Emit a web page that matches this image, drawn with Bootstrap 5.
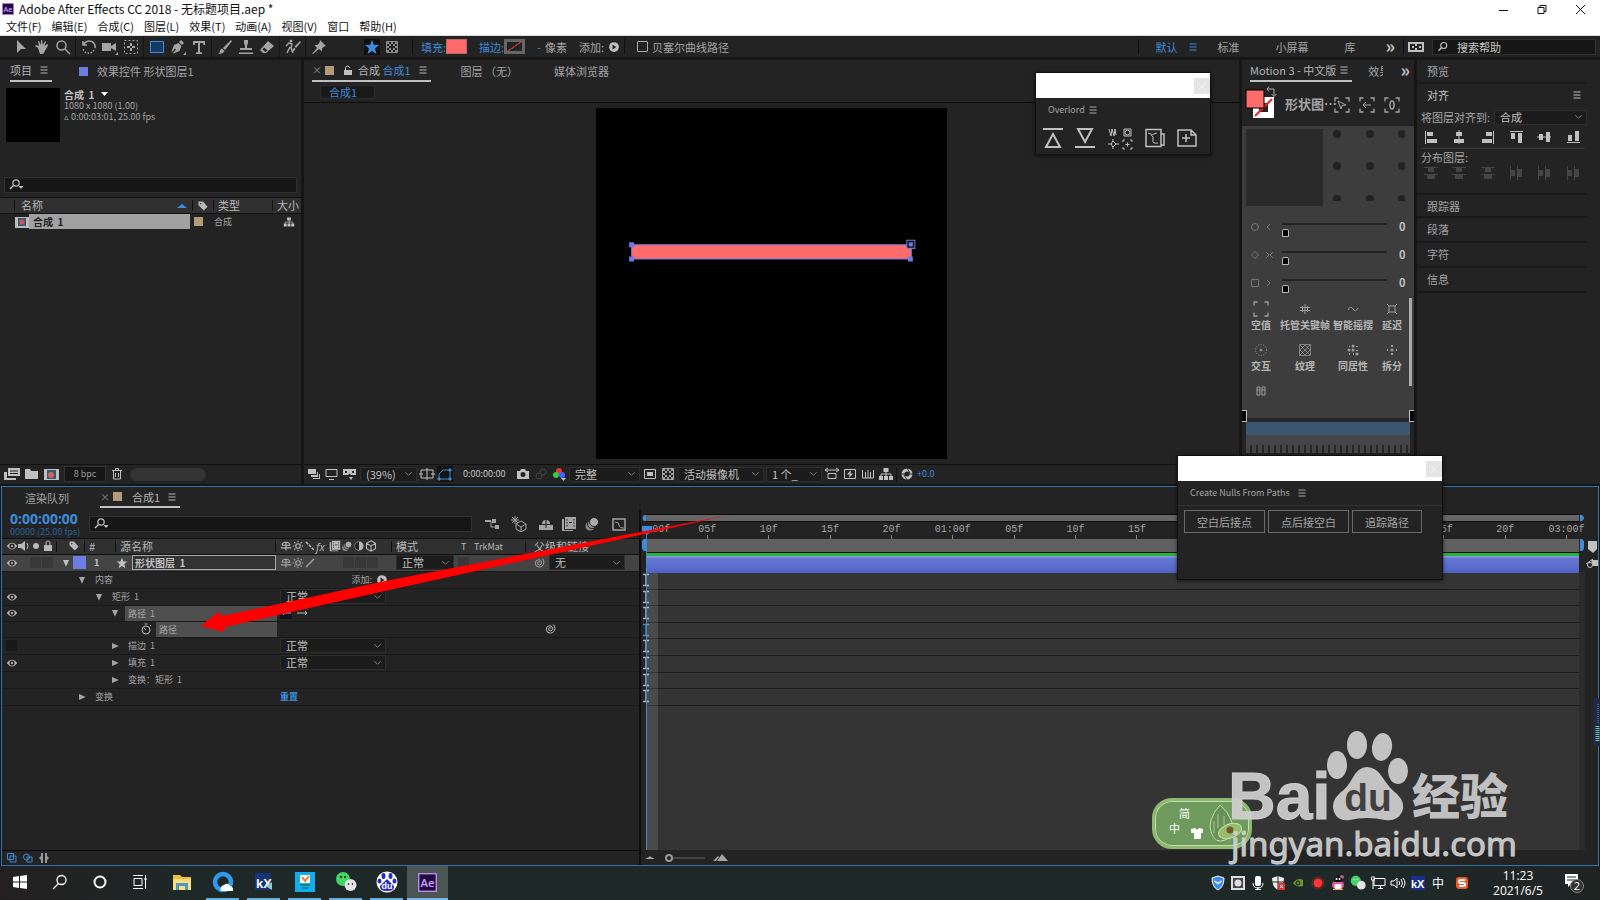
<!DOCTYPE html>
<html lang="zh-CN">
<head>
<meta charset="utf-8">
<meta name="viewport" content="width=device-width, initial-scale=1">
<title>Adobe After Effects CC 2018 - 无标题项目.aep *</title>
<link href="https://cdn.jsdelivr.net/npm/bootstrap@5.3.0/dist/css/bootstrap.min.css" rel="stylesheet">
<style>
:root{--ink:#a4a4a4;--bluec:#3b8cdc;--panel:#232323;--edge:#151515;--cjk:"Noto Sans CJK SC",sans-serif}
body{height:100vh;min-height:600px;overflow:hidden;background:var(--edge);color:var(--ink);font:11px/16px var(--cjk)}
svg{display:block;flex:none}
.i{width:16px;height:16px;fill:currentColor;stroke:none}
.l{fill:none;stroke:currentColor}
.s12{width:12px;height:12px}
.s22{width:22px;height:22px}
a{color:inherit;text-decoration:none}
button{background:none;border:0;padding:0;color:inherit;line-height:inherit}
input,select{font:inherit;color:inherit}
.blue{color:var(--bluec)}
.lt{color:#c0c0c0}
/* window chrome */
.titlebar{height:18px;background:#fff;color:#111;font:12px/18px var(--cjk)}
.menubar{height:18px;background:#fff;color:#111;font:11px/17px var(--cjk);border-bottom:1px solid #ddd}
.menubar a{margin-right:10px}
.toolbar{height:21px;background:var(--panel);margin-bottom:3px}
.tgroup{border-right:1px solid #151515;padding-right:2px;margin-right:2px}
.tgroup button{width:21px;height:21px;display:flex;align-items:center;justify-content:center}
.tgroup .on{color:var(--bluec)}
.vr1{width:1px;height:15px;background:#111}
.fillbox{width:21px;height:15px;border:1px solid #b66}
.searchbox{background:#161616;border:1px solid #303030;height:16px}
.searchbox input{background:none;border:0;outline:0;flex:1;min-width:0;padding:0;line-height:14px}
.searchbox input::placeholder{color:#c8c8c8;opacity:1}
/* panels */
.upper{flex:425 1 0;min-height:0;gap:3px}
.pane{background:var(--panel);min-width:0;min-height:0;position:relative}
.tabs{height:22px}
.tabon{border-bottom:2px solid #c0c0c0;height:21px;line-height:20px;color:#b4b4b4}
.xx{width:13px;font-size:10px;color:#888}
.proj{width:301px;flex:none}
.motion{width:172px;flex:none}
.side{width:183px;flex:none}
.sq{width:9px;height:9px;background:#b39b78;flex:none}
.thumb{width:54px;height:54px;background:#000}
.meta{font-size:9px;line-height:11px}
.meta b{font-size:10px}
.colhead{background:#303030;border-top:1px solid #111;border-bottom:1px solid #111;height:17px;line-height:15px;color:#b8b8b8;white-space:nowrap}
.colhead .sep{border-left:1px solid #111;height:11px}
.foot{height:20px;border-top:1px solid #111}
.form-select.sel{--bs-form-select-bg-img:url("data:image/svg+xml,%3csvg xmlns='http://www.w3.org/2000/svg' viewBox='0 0 10 6'%3e%3cpath fill='none' stroke='%23888' d='M1.500 1l3.500 3.500L8.500 1'/%3e%3c/svg%3e");background-color:#1c1c1c;background-size:9px 6px;background-position:right 3px center;border:1px solid #2e2e2e;border-radius:1px;padding:0 12px 0 5px;height:15px;line-height:13px;font-size:11px;color:#c0c0c0;min-height:0}
.crumb{background:#191919;border:1px solid #2c2c2c;width:55px;height:14px;line-height:12px;padding-left:8px}
.viewer{border-top:1px solid #0c0c0c;flex:1;min-height:0}
.viewer svg{height:calc(100% - 9px)}
/* motion */
.mhead{height:44px}
.mbody{background:#3d3d3d}
.pad{width:77px;height:77px;background:#2a2a2a}
.dots{width:72px;height:72px}
.srow{height:28px}
.srow b{line-height:20px;height:24px}
input.rng{appearance:none;background:linear-gradient(#232323,#232323) 0 4px/100% 2px no-repeat;height:18px;margin:0;padding:0;width:105px;border:0}
input.rng::-webkit-slider-thumb{appearance:none;width:7px;height:8px;background:#000;border:1px solid #bbb;border-radius:2px 2px 0 0;margin-top:9px}
.mgrid{display:grid;grid-template-columns:38px 50px 46px 32px;font-size:10px;font-weight:700;line-height:12px;color:#b4b4b4;height:101px;overflow:hidden;align-content:start;white-space:nowrap}
.mgrid button{height:41px;display:flex;flex-direction:column;align-items:center;gap:2px;font-weight:700}
.mgrid .i{opacity:.8}
.ticks{height:18px;background:linear-gradient(#454545 0 10px,transparent 10px),repeating-linear-gradient(90deg,#454545 0 4px,#262626 4px 6px)}
.brk{width:5px;height:12px;background:#000;border:1px solid #bbb}
/* right side */
.acc{height:25px;line-height:23px;border-bottom:2px solid #181818;padding-left:10px;width:170px}
.six{display:grid;grid-template-columns:repeat(6,1fr);justify-items:center;width:170px}
/* timeline */
.tl{flex:379 1 0;min-height:0;background:var(--panel);border:1px solid #3373ab;margin:2px 1px 0;position:relative}
.tleft{width:639px;flex:none;border-right:2px solid #0e0e0e}
.time{font:bold 14px/14px "Noto Sans",sans-serif}
.lrow{display:grid;grid-template-columns:54px 224px 112px 138px 1fr;align-items:center;font-size:9px}
.lrow>div{display:flex;align-items:center;min-width:0}
.rows{height:133px;display:grid;grid-auto-rows:1fr}
.rows>.lrow{border-bottom:1px solid #1a1a1a}
.lrow .i{width:12px;height:12px}
.first{height:17px;background:#444;border-bottom:1px solid #1a1a1a}
.d1{padding-left:20px}.d2{padding-left:37px}.d3{padding-left:53px}
.tw{margin-right:7px}
.cell{width:11px;height:11px;background:#383838;margin-right:1px}
.hl{background:#4f4f4f;flex:1;align-self:stretch;height:15px;line-height:15px;padding-left:3px;margin-right:3px}
.lname{width:144px;height:15px;background:#333;border:1px solid #aaa;font-weight:700;font-size:10px;line-height:12px;padding:0 2px;color:#c0c0c0}
.tright{flex:1;min-width:0;padding-top:5px}
.nav1{height:8px;background:#666;border:1px solid #0c0c0c;border-width:1px 0}
.ruler{height:17px;font:10px/11px "Liberation Mono",monospace;padding-top:2px}
.ruler span{flex:0 0 6.579%;text-align:center;background:linear-gradient(#888,#888) center bottom/1px 4px no-repeat;height:15px;white-space:nowrap}
.ruler .half{flex-basis:3.289%;background:none}
.work{height:13px;background:#606060}
.green{height:4px;background:#22b53a;border:1px solid #0c0c0c;border-width:1px 0 0}
.clip{height:17px;background:linear-gradient(#8f98dd 0 1px,#6878d4 2px,#5062c4)}
.tbg{background:#343434;flex:1}
.tbg .rows>div{border-bottom:1px solid #1d1d1d}
.tbg .rows svg{margin-left:-4px}
.playcol{position:absolute;top:59px;bottom:0;left:0;width:12px;background:#ffffff1c}
.playline{position:absolute;top:12px;bottom:0;left:0;width:1px;background:#4388c8}
.tfoot{height:15px;border-top:1px solid #0c0c0c}
.arrow{position:absolute;left:188px;top:18px}
/* floating windows */
.float{position:absolute;background:var(--panel);border:1px solid #111;box-shadow:0 1px 4px #0009}
.fbar{height:25px;background:#fff}
.fbar button{width:16px;height:16px;background:#e4e4e4;color:#f4f4f4;line-height:14px}
.fbtn{border:1px solid #6a6a6a!important;height:23px;padding:0 12px!important}
.wm{position:absolute;right:80px;bottom:30px}
.ime{position:absolute;right:348px;bottom:51px;width:100px;height:51px;border-radius:20px;background:#6f9a5d;border:3px solid #8cb870;box-shadow:inset 0 0 0 1px #c5deb0;color:#fff}
.gauge{position:absolute;right:0;top:698px;width:7px;height:48px;background:#1f2b45;border-radius:3px}
#tz{appearance:none;width:40px;height:6px;background:linear-gradient(#444,#444) center/100% 2px no-repeat;overflow:visible}
#tz::-webkit-slider-thumb{width:8px;height:8px;margin-top:-2px;background:#232323;border:2px solid #999;border-radius:50%}
#tz::-webkit-slider-runnable-track{height:4px;background:none}
/* taskbar */
.taskbar{height:34px;flex:none;background:linear-gradient(90deg,#231f20,#1e2927 12%,#1e2927 88%,#1f2423);color:#fff}
.tk{height:34px;width:41px;display:flex;align-items:center;justify-content:center;border-bottom:2px solid transparent!important}
.tk.w40{width:40px}
.tk.run{background:linear-gradient(#6aaede,#6aaede) center bottom/33px 2px no-repeat;background-origin:border-box}
.tk.act{background:#4b5553;border-bottom-color:#7db7e4!important}
.tray button{width:20px;display:flex;justify-content:center}
.clock{font:12px/15px "Open Sans",sans-serif;width:60px;text-align:center}
</style>
</head>
<body class="d-flex flex-column position-relative">
<svg width="0" height="0" class="position-absolute">
<defs>
<symbol id="ham" viewBox="0 0 16 16"><path d="M4.500 5h7M4.500 8h7M4.500 11h7" stroke="currentColor" fill="none"/></symbol>
<symbol id="eye" viewBox="0 0 16 16"><path d="M1 8q7-9 14 0q-7 9-14 0z" /><circle cx="8" cy="8" r="3.500" fill="#222"/><circle cx="8" cy="8" r="1.500"/></symbol>
<symbol id="mag" viewBox="0 0 16 16"><circle cx="9" cy="6" r="4" fill="none" stroke="currentColor" stroke-width="1.500"/><path d="M6 9l-4 4" stroke="currentColor" stroke-width="1.800"/></symbol>
<symbol id="magd" viewBox="0 0 16 16"><circle cx="7" cy="6" r="3.200" fill="none" stroke="currentColor" stroke-width="1.200"/><path d="M4.500 8.500L1 12" stroke="currentColor" stroke-width="1.500"/><path d="M9.500 9h5L12 12z"/></symbol>
<symbol id="tag" viewBox="0 0 16 16"><path fill-rule="evenodd" d="M2 2h6l6 7-5 5-7-7zM5 4a1 1 0 100 2 1 1 0 000-2z"/></symbol>
<symbol id="star" viewBox="0 0 16 16"><path d="M8 1l2 5h5l-4 3.500 1.500 5.500L8 12l-4.500 3L5 9.500 1 6h5z"/></symbol>
<symbol id="dn" viewBox="0 0 16 16"><path d="M4 4h8l-4 9z"/></symbol>
<symbol id="rt" viewBox="0 0 16 16"><path d="M4 4v8l9-4z"/></symbol>
<symbol id="play" viewBox="0 0 16 16"><circle cx="8" cy="8" r="6.500"/><path d="M6 4.500v7L11 8z" fill="#222"/></symbol>
<symbol id="spiral" viewBox="0 0 16 16"><path fill="none" stroke="currentColor" stroke-width="1.300" d="M9.500 6.500Q6.500 5.500 6 8q0 2.500 2.500 2.500 3 0 3-3.500Q11 3.500 7.500 3.500 3 4 3 8.500q.5 5 5.500 5 5.500-.5 6-6.500 0-3-2-5"/></symbol>
<symbol id="shy" viewBox="0 0 16 16"><path fill="none" stroke="currentColor" stroke-width="1.500" d="M3 7q0-4 5-4t5 4zM8 3v11M1 10.500h14"/></symbol>
<symbol id="sun" viewBox="0 0 16 16"><circle cx="8" cy="8" r="3" fill="none" stroke="currentColor" stroke-width="1.500"/><path stroke="currentColor" stroke-width="1.500" d="M8 1v2M8 13v2M1 8h2M13 8h2M3 3l1.500 1.500M11.500 11.500L13 13M3 13l1.500-1.500M11.500 4.500L13 3"/></symbol>
<symbol id="film" viewBox="0 0 16 16"><path d="M4 1h11v12H4z"/><path d="M1 3h2v11h9v1H1z"/><path d="M6 3v8M13 3v8" stroke="#222" stroke-dasharray="1.500 1.500"/><path d="M8 6.500h3" stroke="#222"/></symbol>
<symbol id="blur" viewBox="0 0 16 16"><circle cx="6" cy="10" r="4.500" fill="#888"/><circle cx="8" cy="8" r="4.500" fill="#999" stroke="#222"/><circle cx="10" cy="6" r="4.500" fill="#aaa" stroke="#222"/></symbol>
<symbol id="cube" viewBox="0 0 16 16"><path fill="none" stroke="currentColor" stroke-width="1.400" d="M8 1l6 3.500v7L8 15l-6-3.500v-7zM2 4.500L8 8l6-3.500M8 8v7"/></symbol>
<symbol id="tree" viewBox="0 0 16 16"><path d="M5.500 2h5v4h-5zM1 10h4v4H1zM6 10h4v4H6zM11 10h4v4h-4z"/><path d="M8 6v4M3 10V8h10v2" fill="none" stroke="currentColor"/></symbol>
<symbol id="chk" viewBox="0 0 16 16"><g opacity=".8"><path fill="none" stroke="currentColor" d="M2.500 2.500h11v11h-11z"/><path d="M3 3h2v2H3zM7 3h2v2H7zM11 3h2v2h-2zM5 5h2v2H5zM9 5h2v2H9zM3 7h2v2H3zM11 7h2v2h-2zM5 9h2v2H5zM9 9h2v2H9zM3 11h2v2H3zM7 11h2v2H7zM11 11h2v2h-2z"/></g></symbol>
<symbol id="ibeam" viewBox="0 0 8 14"><path d="M1 1.500h6M1 12.500h6M4 1.500v11" fill="none" stroke="currentColor" stroke-width="1.500"/></symbol>
<symbol id="al1" viewBox="0 0 16 16"><path d="M2 2h1v13H2zM4 3h6v4H4zM4 10h10v4H4z"/></symbol>
<symbol id="al2" viewBox="0 0 16 16"><path d="M7.500 1h1v14h-1zM5 3h6v4H5zM3 10h10v4H3z"/></symbol>
<symbol id="di1" viewBox="0 0 16 16"><path d="M1 2h14v1H1zM5 3h6v4H5zM1 9h14v1H1zM4 10h8v4H4z"/></symbol>
<symbol id="cor" viewBox="0 0 16 16"><path fill="none" stroke="currentColor" stroke-width="1.300" d="M1 4.500V1h3.500M11.500 1H15v3.500M15 11.500V15h-3.500M4.500 15H1v-3.500"/></symbol>
<symbol id="ae" viewBox="0 0 20 20"><path d="M0 0h20v20H0z" fill="#b98be8"/><path d="M1.500 1.500h17v17h-17z" fill="#220840"/><text x="10" y="14.500" font-size="12" font-weight="600" font-family="Open Sans" fill="#c9a0ff" text-anchor="middle">Ae</text></symbol>
<symbol id="wx" viewBox="0 0 22 22"><circle cx="8" cy="8" r="7" fill="#41d466"/><circle cx="6" cy="6" r="1"/><circle cx="10" cy="6" r="1"/><circle cx="15.500" cy="14" r="6" fill="#e4e4e4"/><circle cx="13.500" cy="13" r=".8"/><circle cx="17.500" cy="13" r=".8"/></symbol>
</defs></svg>

<header class="titlebar d-flex align-items-center">
 <svg class="s12" style="margin:0 5px 0 2px"><use href="#ae"/></svg><span>Adobe After Effects CC 2018 - 无标题项目.aep *</span>
 <div class="ms-auto d-flex pe-2 me-1" style="gap:22px">
  <button aria-label="最小化"><svg class="i l"><path d="M3 9.500h9"/></svg></button>
  <button aria-label="还原"><svg class="i l"><path d="M4 6.500h6v6H4zM6 6V4.500h6v6h-2"/></svg></button>
  <button aria-label="关闭"><svg class="i l"><path d="M4 4l9 9M13 4l-9 9"/></svg></button>
 </div>
</header>
<nav class="menubar d-flex" style="padding-left:6px">
 <a href="#">文件(F)</a><a href="#">编辑(E)</a><a href="#">合成(C)</a><a href="#">图层(L)</a><a href="#">效果(T)</a><a href="#">动画(A)</a><a href="#">视图(V)</a><a href="#">窗口</a><a href="#">帮助(H)</a>
</nav>
<div class="toolbar d-flex align-items-center">
 <div class="d-flex align-items-center" style="padding-left:10px;width:413px">
  <div class="tgroup d-flex">
   <button aria-label="选取"><svg class="i"><path d="M4 1v13l4-4h5z"/></svg></button>
   <button aria-label="手形"><svg class="i"><path d="M4 9L1 7l1-1 3 1-1-5h1l2 4V1h1l1 5 2-4 1 .5L10.500 7l3-2 .7 1L11 12l-2 3H6z"/></svg></button>
   <button aria-label="缩放"><svg class="i l" stroke-width="1.500"><circle cx="6.500" cy="6.500" r="4.500"/><path d="M10 10l5 5"/></svg></button>
  </div>
  <div class="tgroup d-flex">
   <button aria-label="旋转"><svg class="i l" stroke-width="1.500"><path d="M2 2v4h4M2.500 6a6 6 0 018-3.500A6 6 0 0114 9"/><path d="M13 11a6 6 0 01-11-1" stroke-dasharray="1.500 1.500"/></svg></button>
   <button aria-label="摄像机"><svg class="i"><path d="M0 4h9v3l5-3v8l-5-3v3H0zM16 13v3h-3z"/></svg></button>
   <button aria-label="锚点"><svg class="i l"><path d="M1.500 1.500h13v13h-13z" stroke-dasharray="2 2"/><path d="M8 4v8M4 8h8" stroke-width="2" stroke-dasharray="3 2"/></svg></button>
  </div>
  <div class="tgroup d-flex">
   <button class="on" aria-label="矩形"><svg class="i"><path d="M1.500 2.500h13v11h-13z" fill="#143a63" stroke="currentColor"/></svg></button>
   <button aria-label="钢笔"><svg class="i"><path d="M11 1l3 3-2 2-3-3zM8.500 4l3 3-2 5-6 2.500L3 14l3-3.500-1-1L2 13l-.5-.5L4 6zM16 13v3h-3z"/></svg></button>
   <button aria-label="文字"><svg class="i"><path d="M2 2h12v4h-1.500L12 4H9v9l2 .5V15H5v-1.500L7 13V4H4l-.5 2H2z"/></svg></button>
  </div>
  <div class="tgroup d-flex">
   <button aria-label="画笔"><svg class="i"><path d="M14 1l1 1-7 9-2-2zM5 9.500L7.500 12Q6 15 1 15q2-1 2-3t2-2.500z"/></svg></button>
   <button aria-label="图章"><svg class="i"><path d="M6 1h4v3L9 7v2h5v2H2V9h5V7L6 4zM1 13.500h14V15H1z"/></svg></button>
   <button aria-label="橡皮擦"><svg class="i"><path d="M9 2l6 5-8 7H4L1 11zM3.500 10.500l3 2.500 2-1.500-3.500-3z" fill-rule="evenodd"/></svg></button>
  </div>
  <div class="tgroup d-flex"><button aria-label="Roto"><svg class="i"><circle cx="6" cy="2" r="1.500"/><path d="M1 7l3-3 3 1-1 4 2 5M5 8l-3 6" fill="none" stroke="currentColor" stroke-width="1.500"/><path d="M15 2l1 1-5 6-1.500-1.500zM9 8.500l1.500 1.500Q9 13 6.500 12.500z"/></svg></button></div>
  <div class="d-flex tgroup border-0"><button aria-label="操控点"><svg class="i"><path d="M9 1l6 6-2 .5-2 2v3l-3-2.500L2 15H1l5-6-2.500-3h3l2-2.500z"/></svg></button></div>
  <div class="d-flex gap-1 ms-auto" style="margin-right:12px"><span class="blue" style="background:#111"><svg class="i"><use href="#star"/></svg></span><svg class="i"><use href="#chk"/></svg></div>
  <div class="vr1"></div>
 </div>
 <div class="d-flex align-items-center ps-2">
  <a href="#" class="blue">填充:</a><button class="fillbox" style="background:#ff6b6b" aria-label="填充颜色"></button>
  <a href="#" class="blue ms-2 ps-1">描边:</a><button class="fillbox" style="background:linear-gradient(145deg,#222 45%,#b33 47% 53%,#222 55%);border:3px solid #666" aria-label="描边颜色"></button>
  <span class="blue ps-2 pe-1 ms-1">-</span><span class="me-2">像素</span><span class="ms-1">添加:</span><svg class="i s12 ms-1 lt me-1"><use href="#play"/></svg><div class="vr1 me-2"></div>
  <label class="d-flex align-items-center gap-1 ms-1"><input type="checkbox" class="form-check-input m-0" style="width:11px;height:11px;border-radius:1px;background:#232323;border:1px solid #aaa">贝塞尔曲线路径</label>
 </div>
 <div class="ms-auto d-flex align-items-center">
  <div class="vr1 me-3"></div>
  <a href="#" class="blue">默认</a><svg class="i blue ms-2"><use href="#ham"/></svg>
  <a href="#" class="ms-3">标准</a><a href="#" style="margin:0 36px">小屏幕</a><a href="#">库</a>
  <b class="lt" style="margin:-4px 8px 0 30px;font-size:18px">»</b><div class="vr1 me-1"></div>
  <svg class="i lt"><path fill-rule="evenodd" d="M0 3h16v10H0zM2 5v6h5V5zM9 5v6h5V5zM4 7h2v2H4zM11 7h2v2h-2zM7 7h2v2H7z"/></svg>
  <label class="searchbox d-flex align-items-center ms-2 me-1 lt" style="width:164px"><svg class="i s12 mx-1"><use href="#mag"/></svg><input class="ms-1" placeholder="搜索帮助" aria-label="搜索帮助"></label>
 </div>
</div>

<main class="upper d-flex">
 <section class="pane proj d-flex flex-column">
  <div class="tabs d-flex align-items-center" style="padding-left:10px">
   <div class="tabon d-flex align-items-center"><span>项目</span><svg class="i ms-1"><use href="#ham"/></svg></div>
   <span class="sq" style="background:#6c7ee0;margin:0 9px 0 27px"></span><span>效果控件 形状图层1</span>
  </div>
  <div class="d-flex" style="padding:6px 6px 0">
   <div class="thumb"></div>
   <div class="ps-1 meta"><b class="d-flex align-items-center lt">合成 &nbsp;1<svg class="i s12 ms-1 text-white"><path d="M3 4h7l-3.500 4z"/></svg></b>1080 x 1080 (1.00)<br>▵ 0:00:03:01, 25.00 fps</div>
  </div>
  <label class="searchbox d-flex align-items-center mx-1 ps-1" style="margin-top:35px"><svg class="i lt"><use href="#magd"/></svg><input aria-label="搜索项目"></label>
  <div class="colhead d-flex align-items-center" style="margin-top:4px;padding-left:14px">
   <span class="sep"></span><span style="width:157px;padding-left:6px">名称</span><svg class="i s12 blue ms-1"><path d="M1 8l5-4 5 4z"/></svg><span class="sep ms-1 me-1"></span><svg class="i s12"><use href="#tag"/></svg><span class="sep mx-1"></span><span style="width:54px">类型</span><span class="sep me-1"></span><span>大小</span>
  </div>
  <div class="d-flex align-items-center" style="height:15px;padding-left:15px">
   <svg class="i" style="width:14px"><path d="M0 3h14v11H0z" fill="#bbb"/><path d="M3 4h8v8H3z" fill="#385a70"/><circle cx="7" cy="8" r="2.500" fill="#c55"/></svg>
   <b class="ps-1" style="background:#a0a0a0;color:#222;width:161px;height:15px;font-size:10px;line-height:15px">合成 &nbsp;1</b>
   <span class="sq ms-1 me-2"></span><span style="font-size:9px;width:72px;padding-left:3px">合成</span><svg class="i s12 lt"><use href="#tree"/></svg>
  </div>
  <div class="foot mt-auto d-flex align-items-center gap-1 lt" style="padding-left:4px">
   <svg class="i"><path d="M4 2h12v8H4zM0 6h3v6h9v2H0z"/><path d="M6 5h8M6 7.500h8" stroke="#222"/></svg><svg class="i"><path d="M1 3h5l1 2h7v8H1z"/></svg><svg class="i"><path d="M0 3h15v11H0z"/><path d="M3 4h9v9H3z" fill="#385a70"/><circle cx="7" cy="9" r="3" fill="#c66"/></svg>
   <button class="searchbox" style="width:42px;font-size:9px;line-height:14px;color:#999">8 bpc</button><svg class="i l"><path d="M3.500 5v8h7V5M2 4.500h10M5.500 4V2.500h3V4M5.500 7v4M8.500 7v4"/></svg><span class="rounded-pill" style="width:76px;height:13px;background:#343434"></span>
  </div>
 </section>

 <section class="pane flex-grow-1 d-flex flex-column">
  <div class="tabs d-flex align-items-center" style="padding-left:8px">
   <div class="tabon d-flex align-items-center"><span class="xx">×</span><span class="sq"></span><svg class="i s12 ms-2 me-1 lt"><path d="M2 6h8v5H2z"/><path d="M3.500 6V4a2 2 0 014 0" fill="none" stroke="currentColor"/></svg><span>合成 <span class="blue">合成1</span></span><svg class="i ms-1"><use href="#ham"/></svg></div>
   <span style="margin:0 36px 0 30px">图层 （无）</span><span>媒体浏览器</span>
  </div>
  <div style="padding:3px 0 3px 16px"><div class="crumb blue">合成1</div></div>
  <div class="viewer d-flex justify-content-center align-items-center">
   <svg viewBox="0 0 351 351"><path d="M0 0h351v351H0z" fill="#000"/><path d="M35.500 136.500h279v14h-279z" fill="#ff6b6b" stroke="#6b7be0"/><path d="M33 134h5v5h-5zM33 148h5v5h-5zM311 148h5v5h-5z" fill="#6b7be0"/><path d="M310 132h8v8h-8z" fill="#111" stroke="#6b7be0"/><path d="M312 134h4v4h-4z" fill="#6b7be0"/></svg>
  </div>
  <div class="foot d-flex align-items-center lt" style="padding-left:2px;gap:2px">
   <svg class="i"><path d="M2 3h8v5H2zM11 6h1v5H5V9h6zM13 8h1v5H7v-1h6z"/></svg><svg class="i l"><path d="M2 3.500h11v7H2zM5 13.500h5"/></svg><svg class="i"><path fill-rule="evenodd" d="M1 3h13v6H9L7.500 7.500 6 9H1zM3 5v2h2V5zM10 5v2h2V5zM7 11h4l-2 3z"/></svg>
   <select class="form-select sel" style="width:57px" aria-label="缩放"><option>(39%)</option></select>
   <svg class="i l"><path d="M2 4h12v8H2zM8 2v12M0 8h4M12 8h4"/></svg><span class="blue" style="background:#141414"><svg class="i l"><path d="M2 13V8l4-4h7v9z"/><path d="M1 12h2v2H1zM12 12h2v2h-2zM12 3h2v2h-2z" fill="currentColor"/></svg></span>
   <span class="px-2" style="font-size:9px;width:58px">0:00:00:00</span>
   <svg class="i"><path fill-rule="evenodd" d="M2 5h3l1-2h4l1 2h3v8H2zM8 6a2.500 2.500 0 100 5 2.500 2.500 0 000-5z"/></svg><svg class="i l" style="color:#444"><circle cx="10" cy="6" r="3"/><circle cx="6" cy="10" r="3"/></svg><svg class="i"><circle cx="8" cy="5" r="3" fill="#e33"/><circle cx="5" cy="9" r="3" fill="#3c4"/><circle cx="11" cy="9" r="3" fill="#46f"/><path d="M10 12h5l-2.500 3z"/></svg>
   <select class="form-select sel" style="width:71px" aria-label="分辨率"><option>完整</option></select>
   <svg class="i"><path d="M2.500 3.500h11v9h-11z" fill="none" stroke="currentColor"/><path d="M5 6h6v4H5z"/></svg><svg class="i"><use href="#chk"/></svg>
   <select class="form-select sel" style="width:86px" aria-label="视图"><option>活动摄像机</option></select>
   <select class="form-select sel" style="width:56px" aria-label="视图布局"><option>1 个_</option></select>
   <svg class="i l"><path d="M1 4h14M4 2L1 4l3 2M12 2l3 2-3 2M4 7.500h8v5H4z"/></svg><svg class="i"><path d="M2.500 3.500h11v9h-11z" fill="none" stroke="currentColor"/><path d="M9 4L5 8.500h2.500L7 12l4-4.500H8.500z"/></svg><svg class="i l"><path d="M2.500 4v8h11V4M5.500 6v6M8 4v8M10.500 6v6"/></svg><svg class="i"><use href="#tree"/></svg><div class="vr1"></div><svg class="i l"><circle cx="8" cy="8" r="4" stroke-width="3"/><path d="M8 2l3 5M14 8h-5M8 14l-3-5M2 8h5" stroke="#232323"/></svg><span class="blue" style="font-size:9px">+0.0</span>
  </div>
 </section>

 <section class="pane motion d-flex flex-column">
  <div class="tabs d-flex align-items-center overflow-hidden" style="padding-left:8px">
   <div class="tabon d-flex align-items-center lt text-nowrap"><span>Motion 3 - 中文版</span><svg class="i"><use href="#ham"/></svg></div>
   <span class="text-nowrap overflow-hidden" style="margin-left:16px;width:15px">效果</span><b class="lt ms-auto pe-1" style="font-size:18px;line-height:14px;margin-top:-4px">»</b>
  </div>
  <div class="mhead d-flex">
   <svg width="38" height="42"><path d="M14 18h15v15H14z" fill="none" stroke="#fff" stroke-width="6"/><path d="M13 34l17-17" stroke="#e22" stroke-width="2"/><path d="M4 8h18v18H4z" fill="#ff6b6b" stroke="#000"/><path d="M25 7h7v7M27 4.500L25 7l2 2.500M29.500 12l2.500 2.500 2.500-2.500" fill="none" stroke="#aaa"/></svg>
   <b class="text-nowrap" style="font-size:13px;line-height:44px;margin-left:5px">形状图…</b>
   <div class="d-flex align-items-center" style="gap:9px;margin:1px 0 0 -3px"><svg class="i"><use href="#cor"/><path d="M4 4l8 4-4 .5L7 12z" fill="none" stroke="currentColor"/></svg><svg class="i"><use href="#cor"/><path d="M12 8H4M7 5L4 8l3 3" fill="none" stroke="currentColor"/></svg><svg class="i"><use href="#cor"/><ellipse cx="8" cy="8" rx="2" ry="4" fill="none" stroke="currentColor" stroke-width="1.500"/></svg></div>
  </div>
  <div class="mbody flex-grow-1 d-flex flex-column" style="padding-top:3px">
   <div class="d-flex ps-1" style="gap:10px"><div class="pad"></div><svg class="dots" fill="#222"><circle cx="4" cy="5" r="4"/><circle cx="37" cy="5" r="4"/><circle cx="69" cy="5" r="4"/><circle cx="4" cy="37" r="4"/><circle cx="37" cy="37" r="4"/><circle cx="69" cy="37" r="4"/><circle cx="4" cy="70" r="4"/><circle cx="37" cy="70" r="4"/><circle cx="69" cy="70" r="4"/></svg></div>
   <div style="padding:8px 0 0 8px">
    <div class="srow d-flex align-items-center"><svg class="i l" style="width:32px;color:#777"><circle cx="5" cy="7" r="3.500"/><path d="M20 4l-3 3 3 3"/></svg><input type="range" class="rng" min="0" max="100" value="0" aria-label="缓入"><b class="lt ps-2 ms-1">0</b></div>
    <div class="srow d-flex align-items-center"><svg class="i l" style="width:32px;color:#777"><path d="M5 3.500L8.500 7 5 10.500 1.500 7zM16 4l3 3-3 3M23 4l-3 3 3 3"/></svg><input type="range" class="rng" min="0" max="100" value="0" aria-label="缓动"><b class="lt ps-2 ms-1">0</b></div>
    <div class="srow d-flex align-items-center"><svg class="i l" style="width:32px;color:#777"><path d="M1.500 3.500h7v7h-7zM17 4l3 3-3 3"/></svg><input type="range" class="rng" min="0" max="100" value="0" aria-label="缓出"><b class="lt ps-2 ms-1">0</b></div>
   </div>
   <div class="d-flex">
   <div class="mgrid" style="margin-top:3px">
    <button><svg class="i"><use href="#cor"/></svg>空值</button>
    <button><svg class="i l"><path d="M8 3v10M5.500 5v6M10.500 5v6M3 6.500h10M3 9.500h10"/></svg>托管关键帧</button>
    <button><svg class="i l"><path d="M3 9q2.500-5 5-1t5-1"/></svg>智能摇摆</button>
    <button><svg class="i l"><path d="M5 5h6v6H5zM3 3l2 2M13 3l-2 2M3 13l2-2M13 13l-2-2"/></svg>延迟</button>
    <button><svg class="i l"><circle cx="8" cy="8" r="5.500" stroke-dasharray="1 1.500"/><circle cx="8" cy="8" r="1"/></svg>交互</button>
    <button><svg class="i l"><path d="M2.500 2.500h11v11h-11zM3 3l10 10M13 3L3 13M8 3l5 5-5 5-5-5z" stroke-width=".7"/></svg>纹理</button>
    <button><svg class="i"><circle cx="8" cy="4" r="1.500"/><circle cx="4" cy="8" r="1.500"/><circle cx="8" cy="8" r="1.500"/><circle cx="12" cy="12" r="1.500"/><path d="M11 4h2v1h-2zM11 8h2v1h-2zM4 11h1v2H4zM8 11h1v2H8zM4 4h1v1H4z"/></svg>同居性</button>
    <button><svg class="i"><circle cx="8" cy="8" r="1.500"/><path d="M7 3h2v2H7zM7 11h2v2H7zM3 7h1v2H3zM12 7h1v2h-1z"/></svg>拆分</button>
    <button><svg class="i l"><path d="M4 4h3v8H4zM9 4h3v8H9zM4 7h3M9 7h3"/></svg>克隆</button>
   </div><div style="width:3px;height:88px;background:#aaa;margin-left:1px"></div></div>
   <div class="d-flex justify-content-between mt-2"><span class="brk border-start-0"></span><span class="flex-grow-1 align-self-end" style="height:4px;background:#262626"></span><span class="brk border-end-0"></span></div>
   <div style="padding:0 4px;background:#232323"><div style="height:13px;background:#3b566f"></div><div class="ticks"></div></div>
   <div class="flex-grow-1" style="background:var(--panel)"></div>
  </div>
 </section>

 <aside class="pane side">
  <div class="acc" style="height:24px">预览</div>
  <div class="lt d-flex align-items-center" style="padding:3px 0 0 10px;width:168px"><span>对齐</span><svg class="i ms-auto"><use href="#ham"/></svg></div>
  <div class="d-flex align-items-center ps-1" style="margin-top:6px;width:170px"><label for="alignto" class="text-nowrap">将图层对齐到:</label><select id="alignto" class="form-select sel ms-1"><option>合成</option></select></div>
  <div class="six lt" style="margin-top:4px">
   <svg class="i"><use href="#al1"/></svg><svg class="i"><use href="#al2"/></svg><svg class="i"><g transform="matrix(-1 0 0 1 16 0)"><use href="#al1"/></g></svg><svg class="i"><g transform="matrix(0 1 1 0 0 0)"><use href="#al1"/></g></svg><svg class="i"><g transform="matrix(0 1 1 0 0 0)"><use href="#al2"/></g></svg><svg class="i"><g transform="matrix(0 -1 1 0 0 16)"><use href="#al1"/></g></svg>
  </div>
  <div class="ms-1" style="border-top:1px solid #3a3a3a;margin-top:3px;width:164px">分布图层:</div>
  <div class="six" style="color:#454545;height:28px">
   <svg class="i"><use href="#di1"/></svg><svg class="i"><use href="#di1"/></svg><svg class="i"><use href="#di1"/></svg><svg class="i"><g transform="matrix(0 1 1 0 0 0)"><use href="#di1"/></g></svg><svg class="i"><g transform="matrix(0 1 1 0 0 0)"><use href="#di1"/></g></svg><svg class="i"><g transform="matrix(0 1 1 0 0 0)"><use href="#di1"/></g></svg>
  </div>
  <div class="acc" style="border-top:2px solid #181818">跟踪器</div><div class="acc">段落</div><div class="acc">字符</div><div class="acc">信息</div>
 </aside>
</main>

<section class="tl d-flex flex-column">
 <div class="tabs d-flex align-items-center" style="padding-left:23px">
  <span>渲染队列</span>
  <div class="tabon d-flex align-items-center lt" style="margin-left:31px"><span class="xx">×</span><span class="sq" style="margin-right:10px"></span><span>合成1</span><svg class="i ms-1"><use href="#ham"/></svg></div>
 </div>
 <div class="d-flex flex-grow-1" style="min-height:0">
  <div class="tleft d-flex flex-column">
   <div class="d-flex" style="height:29px;padding:3px 0 0 8px">
    <div class="blue" style="width:79px"><div class="time">0:00:00:00</div><div style="font-size:9px;line-height:11px;color:#25609a">00000 (25.00 fps)</div></div>
    <label class="searchbox d-flex align-items-center ps-1 mt-1" style="width:383px"><svg class="i lt"><use href="#magd"/></svg><input aria-label="搜索图层"></label>
    <div class="d-flex" style="gap:7px;padding:4px 0 0 12px">
     <svg class="i"><path d="M1 4h6v2H1zM8 3h4v4H8zM11 9h4v4h-4z"/><path d="M7 5v6h4" fill="none" stroke="currentColor"/></svg><svg class="i ms-1"><path d="M4 0v8M0 4h8M1 1l6 6M7 1L1 7" stroke="currentColor"/><path d="M10 5l5 3v5l-5 3-5-3V8zM5 8l5 3 5-3M10 11v5" fill="none" stroke="currentColor"/></svg><svg class="i ms-1"><path d="M4 8q0-4 4-4t4 4zM1 9h14v5H1z"/><path d="M8 3v9" stroke="#232323"/></svg><svg class="i"><use href="#film"/></svg><svg class="i"><use href="#blur"/></svg><svg class="i l ms-1"><path d="M2 3h12v11H2z" stroke-width="1.500"/><path d="M4 6q4 0 4 3t5 3"/></svg>
    </div>
   </div>
   <div class="colhead lrow" style="font-size:11px">
    <div class="ps-1"><svg class="i"><use href="#eye"/></svg><svg class="i"><path d="M0 4h3l4-3v10L3 8H0z"/><path d="M9 3q2 3 0 6" stroke="currentColor" fill="none"/></svg><svg class="i"><circle cx="6" cy="6" r="3"/></svg><svg class="i"><path d="M2 5h8v6H2z"/><path d="M4 5V3a2 2 0 014 0v2" fill="none" stroke="currentColor"/></svg></div>
    <div><span class="sep" style="width:12px"></span><svg class="i"><use href="#tag"/></svg><span class="sep ms-1 me-1"></span><span style="width:26px">#</span><span class="sep me-1"></span><span>源名称</span><span class="sep ms-auto me-1"></span></div>
    <div><svg class="i"><use href="#shy"/></svg><svg class="i"><use href="#sun"/></svg><svg class="i l"><path d="M2 2l8 8" stroke-dasharray="3 1" stroke-width="1.500"/></svg><i style="width:13px;font-family:'Open Sans'">fx</i><svg class="i"><use href="#film"/></svg><svg class="i"><use href="#blur"/></svg><svg class="i"><circle cx="6" cy="6" r="4.500"/><path d="M6 2a4 4 0 000 8z" fill="#222"/></svg><svg class="i"><use href="#cube"/></svg><span class="sep ms-auto"></span></div>
    <div class="ps-1"><span style="width:65px">模式</span><span style="width:13px;font-size:9px">T</span><span style="font-size:9px">TrkMat</span><span class="sep ms-auto me-1"></span></div>
    <div class="ps-1"><span>父级和链接</span></div>
   </div>
   <div class="lrow first">
    <div class="ps-1 lt"><svg class="i" style="margin-right:12px"><use href="#eye"/></svg><span class="cell"></span><span class="cell"></span></div>
    <div class="lt"><svg class="i ms-1"><use href="#dn"/></svg><span class="me-1" style="background:#6c7ee0;width:13px;height:13px;margin-left:1px"></span><span style="width:26px" class="fw-bold ps-1">1</span><svg class="i me-1"><use href="#star"/></svg><input class="lname" value="形状图层  1" aria-label="图层名称"></div>
    <div><svg class="i"><use href="#shy"/></svg><svg class="i"><use href="#sun"/></svg><svg class="i l" style="margin-right:27px"><path d="M2 10l8-8" stroke-width="1.500"/></svg><span class="cell"></span><span class="cell"></span><span class="cell"></span></div>
    <div><select class="form-select sel ms-1 me-1" style="width:58px" aria-label="模式"><option>正常</option></select><span class="cell"></span></div>
    <div style="padding-left:3px"><svg class="i me-1"><use href="#spiral"/></svg><select class="form-select sel" style="width:76px" aria-label="父级"><option>无</option></select></div>
   </div>
   <div class="rows">
    <div class="lrow"><div></div><div class="d1"><svg class="i tw"><use href="#dn"/></svg>内容</div><div class="justify-content-end gap-1">添加:<svg class="i lt me-1"><use href="#play"/></svg></div></div>
    <div class="lrow"><div class="ps-1 lt"><svg class="i"><use href="#eye"/></svg></div><div class="d2"><svg class="i tw"><use href="#dn"/></svg>矩形 &nbsp;1</div><div><select class="form-select sel" style="width:106px" aria-label="矩形模式"><option>正常</option></select></div></div>
    <div class="lrow"><div class="ps-1 lt"><svg class="i"><use href="#eye"/></svg></div><div class="d3"><svg class="i me-1"><use href="#dn"/></svg><span class="hl">路径 &nbsp;1</span></div><div class="gap-1 lt"><svg class="i l" style="background:#112"><path d="M2 6h9M4 4L2 6l2 2"/></svg><svg class="i l"><path d="M1 6h10M9 4l2 2-2 2"/></svg></div></div>
    <div class="lrow"><div></div><div style="padding-left:84px"><svg class="i l lt me-1"><circle cx="6" cy="7" r="4"/><path d="M6 7L4 5M4.500 1h3M10 2l1 1"/></svg><span class="hl">路径</span></div><div></div><div></div><div style="padding-left:14px"><svg class="i lt"><use href="#spiral"/></svg></div></div>
    <div class="lrow"><div class="ps-1"><span class="cell" style="background:#181818"></span></div><div class="d3"><svg class="i tw"><use href="#rt"/></svg>描边 &nbsp;1</div><div><select class="form-select sel" style="width:106px" aria-label="描边模式"><option>正常</option></select></div></div>
    <div class="lrow"><div class="ps-1 lt"><svg class="i"><use href="#eye"/></svg></div><div class="d3"><svg class="i tw"><use href="#rt"/></svg>填充 &nbsp;1</div><div><select class="form-select sel" style="width:106px" aria-label="填充模式"><option>正常</option></select></div></div>
    <div class="lrow"><div></div><div class="d3"><svg class="i tw"><use href="#rt"/></svg>变换：矩形 &nbsp;1</div></div>
    <div class="lrow"><div></div><div class="d1"><svg class="i tw"><use href="#rt"/></svg>变换</div><div><a href="#" class="blue fw-bold">重置</a></div></div>
   </div>
   <div class="tfoot mt-auto d-flex align-items-center blue ps-1 gap-1"><svg class="i s12 l"><path d="M1.500 1.500h6v6h-6zM4 4h6v6H4z"/></svg><svg class="i s12 l"><circle cx="4.500" cy="5" r="3"/><path d="M5 5h5v5H5z"/></svg><svg class="i s12" style="color:#999"><path d="M3 1h2v10H3V8L1 6l2-2zM9 1H7v10h2V8l2-2-2-2z"/></svg></div>
  </div>
  <div class="tright d-flex flex-column">
   <div class="d-flex flex-grow-1" style="min-height:0">
    <div class="flex-grow-1 d-flex flex-column position-relative" style="margin-left:5px;min-width:0">
     <div class="nav1"></div>
     <div class="ruler d-flex"><span class="half">00f</span><span>05f</span><span>10f</span><span>15f</span><span>20f</span><span>01:00f</span><span>05f</span><span>10f</span><span>15f</span><span>20f</span><span>02:00f</span><span>05f</span><span>10f</span><span>15f</span><span>20f</span><span>03:00f</span></div>
     <div class="work"></div><div class="green"></div><div class="clip"></div>
     <div class="tbg" style="color:#9ab4cc"><div class="rows">
      <div><svg width="8" height="14"><use href="#ibeam"/></svg></div><div><svg width="8" height="14"><use href="#ibeam"/></svg></div><div><svg width="8" height="14"><use href="#ibeam"/></svg></div><div class="blue"><svg width="8" height="14"><use href="#ibeam"/></svg></div><div><svg width="8" height="14"><use href="#ibeam"/></svg></div><div><svg width="8" height="14"><use href="#ibeam"/></svg></div><div><svg width="8" height="14"><use href="#ibeam"/></svg></div><div><svg width="8" height="14"><use href="#ibeam"/></svg></div>
     </div></div>
     <div class="playcol"></div><div class="playline"></div>
     <svg class="position-absolute" style="left:-5px;top:0" width="12" height="40" fill="#3b8cdc"><path d="M5 1v6H3Q0 4 3 1zM1 12h10v5l-5 4-5-4zM5 25v12H3q-2-1-2-3v-6q0-2 2-3z"/></svg>
     <svg class="position-absolute" style="right:-6px;top:0" width="6" height="40" fill="#3b8cdc"><path d="M1 1h2q4 3 0 6H1zM1 25h2q2 1 2 3v6q0 2-2 3H1z"/></svg>
    </div>
    <div style="width:6px;margin-top:58px;background:#2b2b2b"></div>
    <svg class="lt" style="width:13px;height:60px" fill="currentColor"><path d="M3 27h9v8l-4 4-5-4zM6 46h7v6H8z"/><path d="M1 50l7-5" stroke="currentColor"/><circle cx="5" cy="51" r="2.500" fill="none" stroke="currentColor"/></svg>
   </div>
   <div class="tfoot d-flex align-items-center gap-2 border-0 ps-1"><svg class="i s12"><path d="M0 7l4-2 1-1 1 1 4 2z"/></svg><input type="range" class="form-range p-0" min="0" max="100" value="0" aria-label="时间缩放" id="tz"><svg class="i"><path d="M0 11l5-5 1 1-3 4zM4 11l5-7 6 7z"/></svg></div>
  </div>
 </div>
 <svg class="arrow" width="560" height="140" viewBox="190 506 560 140"><path d="M201 627L218 613L222 617L385 582L640 533L729 516L640 536L385 592L225 628L224 633z" fill="#f00"/></svg>
</section>

<footer class="taskbar d-flex">
 <button class="tk w40" aria-label="开始"><svg class="i"><path d="M1 3l6-1v5.500H1zM8 2l7-1v6.500H8zM1 8.500h6V14l-6-1zM8 8.500h7V15l-7-1z"/></svg></button>
 <button class="tk w40" aria-label="搜索"><svg class="i l" stroke-width="1.300"><circle cx="9.500" cy="6" r="4.500"/><path d="M6.500 9.500L1 15"/></svg></button>
 <button class="tk w40" aria-label="Cortana"><svg class="i l" stroke-width="2"><circle cx="8" cy="8" r="5.500"/></svg></button>
 <button class="tk w40" aria-label="任务视图"><svg class="i l"><path d="M2 4.500h8v7H2zM1 1.500h10M1 14.500h10M13.500 1v14M12 5h3"/></svg></button>
 <button class="tk" style="margin-left:1px" aria-label="资源管理器"><svg class="s22"><path d="M2 4h7l2 2h9v13H2z" fill="#f0bd3c"/><path d="M2 8h18v11H2z" fill="#ffdc7d"/><path d="M5 19v-7h12v7h-3v-4H8v4z" fill="#4b9ac4"/></svg></button>
 <button class="tk run" aria-label="浏览器"><svg class="s22"><circle cx="11" cy="11" r="8" fill="none" stroke="#2f9bf0" stroke-width="4.500"/><path d="M9 20a4 4 0 013-6q4-3 6 1 4 1 3 5z" fill="#fff"/></svg></button>
 <button class="tk run" aria-label="kX"><svg class="s22"><path d="M2 2h16v17H2z" fill="#17337a"/><text x="3" y="17" font-size="13" font-weight="700" font-family="Liberation Sans" fill="#fff">kX</text><path d="M14 14l5-3v8l-5-3z" fill="#8cc"/></svg></button>
 <button class="tk run" aria-label="应用"><svg class="s22"><path d="M1 1h20v20H1z" fill="#12aee8"/><path d="M6 4h10v8H6z" fill="#fff"/><path d="M8 6l3 4 4-5" stroke="#e73" fill="none" stroke-width="2"/><path d="M6 14h10M8 17h6" stroke="#056"/></svg></button>
 <button class="tk run" aria-label="微信"><svg class="s22"><use href="#wx"/></svg></button>
 <button class="tk run" aria-label="百度"><svg class="s22"><circle cx="11" cy="11" r="10.500" fill="#fff"/><g fill="#2828c4"><ellipse cx="7.500" cy="5" rx="2" ry="3"/><ellipse cx="14.500" cy="5" rx="2" ry="3"/><ellipse cx="3.500" cy="10" rx="2" ry="2.500"/><ellipse cx="18.500" cy="10" rx="2" ry="2.500"/><path d="M11 8l7 7q1 5-7 5t-7-5z"/></g><text x="11" y="18" font-size="9" font-weight="700" font-family="Liberation Sans" fill="#fff" text-anchor="middle">du</text></svg></button>
 <button class="tk act" aria-label="After Effects"><svg width="19" height="19"><use href="#ae"/></svg></button>
 <div class="tray ms-auto d-flex align-items-center">
  <button aria-label="卫士"><svg class="i"><path d="M8 1l6 2q0 9-6 12Q2 12 2 3z" fill="#3d8bee" stroke="#fff"/><path d="M4.500 6L8 8.500 11.500 6" stroke="#fff" stroke-width="1.500" fill="none"/></svg></button>
  <button aria-label="录屏"><svg class="i"><path d="M2 2h12v12H2z" fill="#444" stroke="#ddd" stroke-width="2"/><circle cx="8" cy="8" r="3.500" fill="#ddd"/></svg></button>
  <button aria-label="麦克风"><svg class="i"><rect x="5" y="1" width="6" height="10" rx="2"/><path d="M3 8q0 5 5 5t5-5M8 12v3M5 14.500h6" fill="none" stroke="#fff"/></svg></button>
  <button aria-label="安全"><svg class="i"><path d="M8 1l6 2q0 9-6 12Q2 12 2 3z" fill="#eee"/><path d="M8 1v14M2 7h12" stroke="#222"/><path d="M8 8h7v7H8z" fill="#d33"/><path d="M10 10l3 3M13 10l-3 3" stroke="#fff"/></svg></button>
  <button aria-label="NVIDIA"><svg class="i"><path d="M3 8q5-6 10-3v6q-6 2-10-3z" fill="#6a9c2c"/><circle cx="8" cy="8" r="2" fill="none" stroke="#111"/></svg></button>
  <button aria-label="录制"><svg class="i"><circle cx="8" cy="8" r="4.500" fill="#f33"/><circle cx="8" cy="8" r="6" fill="none" stroke="#822"/></svg></button>
  <button aria-label="QQ"><svg class="i"><ellipse cx="8" cy="10" rx="6" ry="5" fill="#e4569c"/><circle cx="8" cy="5" r="4" fill="#111"/><ellipse cx="8" cy="11" rx="3.500" ry="3.500" fill="#fff"/><path d="M3 7h10v2H3z" fill="#e4569c"/><circle cx="6.500" cy="4" r="1" fill="#fff"/><circle cx="9.500" cy="4" r="1" fill="#fff"/><path d="M11 0l3 1-1 3-3-2z" fill="#e4569c"/><path d="M3 14h4v1H3zM9 14h4v1H9z" fill="#fa3"/></svg></button>
  <button aria-label="微信"><svg class="i"><use href="#wx"/></svg></button>
  <button aria-label="网络"><svg class="i l"><path d="M4 3.500h11v7H4zM8 13.500h5M10.500 11v2M1.500 2h3v3h-3zM3 5v9"/></svg></button>
  <button aria-label="音量"><svg class="i l"><path d="M1 6h3l3-3v10l-3-3H1zM9 6q1.500 2 0 4M11 4q3 4 0 8M13 3q4 5 0 10"/></svg></button>
  <button aria-label="kX 混音"><svg class="i"><path d="M1 1h14v14H1z" fill="#1a2f8c"/><text x="1" y="13" font-size="11" font-weight="700" font-family="Liberation Sans">kX</text></svg></button>
  <button style="font-size:12px">中</button>
  <button aria-label="搜狗" class="ms-1"><svg class="i"><rect x="2" y="2" width="12" height="12" rx="3" fill="#f0592b"/><path d="M11 5H6.500Q5 5 5 6.500T6.500 8h3Q11 8 11 9.500T9.500 11H5" fill="none" stroke="#fff" stroke-width="2"/></svg></button>
  <div class="clock ms-3">11:23<br>2021/6/5</div>
  <button aria-label="通知" class="position-relative ms-3 me-3"><svg width="22" height="22"><path d="M2 2h13v10H8l-3 3v-3H2z" fill="#fff"/><path d="M4 5h9M4 8h9" stroke="#222"/><circle cx="14" cy="14" r="6.500" fill="#333" stroke="#888"/><text x="14" y="18" font-size="11" font-family="Open Sans" fill="#fff" text-anchor="middle">2</text></svg></button>
 </div>
</footer>

<div class="float" style="right:389px;top:72px;width:176px;height:83px">
 <div class="fbar d-flex align-items-center justify-content-end"><button aria-label="关闭 Overlord">×</button></div>
 <div class="d-flex align-items-center ps-2 ms-1" style="height:24px;font-size:9px">Overlord<svg class="i"><use href="#ham"/></svg></div>
 <div class="d-flex lt justify-content-between" style="padding:5px 12px 0 6px">
  <svg class="s22 l" stroke-width="2"><path d="M1 2h20M4 20L11 7l7 13z"/></svg><svg class="s22 l" stroke-width="2"><path d="M1 20h20M4 2l7 13 7-13z"/></svg>
  <svg class="l" width="27" height="24"><path d="M2 2l2 7 1-7 2 7 1-7 1 6M17 2h7v7h-7zM4 17l2-3 3 3-3 3zM6 12v3M6 19v3M1 17h3M9 17h3"/><circle cx="20.500" cy="5.500" r="2.500"/><path d="M16 15v-2h2M23 13h2v2M25 20v2h-2M18 22h-2v-2M20.500 15.500v4M18.500 17.500h4"/></svg>
  <svg class="s22 l"><path d="M2 2.500h15v17H2zM17 7h3v11h-3" stroke-width="1.500"/><path d="M4 6q4 3 9 0M7 8q3 1 2 5t5 3"/></svg><svg class="s22 l" stroke-width="1.500"><path d="M2 3h13l5 5v11H2zM15 3v5h5M10 7v8M6 11h8"/></svg>
 </div>
</div>
<div class="float" style="right:157px;top:455px;width:266px;height:125px">
 <div class="fbar d-flex align-items-center justify-content-end"><button aria-label="关闭 Create Nulls From Paths">×</button></div>
 <div class="d-flex align-items-center ps-2 ms-1" style="height:24px;font-size:9px">Create Nulls From Paths<svg class="i ms-1"><use href="#ham"/></svg></div>
 <div class="d-flex" style="gap:3px;padding:4px 6px;border-top:1px solid #333"><button class="fbtn">空白后接点</button><button class="fbtn">点后接空白</button><button class="fbtn">追踪路径</button></div>
</div>
<div class="gauge"><svg width="7" height="48"><path d="M5 6v20" stroke="#4a5a80" stroke-width="2" stroke-dasharray="1 1"/><path d="M4.500 28v16" stroke="#6fc79a" stroke-width="4" stroke-dasharray="1 1"/></svg></div>
<div class="ime"><svg width="94" height="45" fill="#fff"><text x="24" y="17" font-size="11" font-family="Noto Sans CJK SC">简</text><text x="14" y="32" font-size="11" font-family="Noto Sans CJK SC">中</text><path d="M36 28l4-1 2 2 2-2 4 1v4h-2v6h-7v-6h-3z"/><path d="M65 4q-13 15-9 27t14 8q14-4 6-20-3-8-11-15z" fill="#688f55" stroke="#c5deb0"/><path d="M63 13v14M59 20v12M69 15v9" stroke="#a5c890"/><ellipse cx="75" cy="30" rx="12" ry="7" fill="#96bd6a" stroke="#c5deb0" transform="rotate(-20 75 30)"/><circle cx="75" cy="29" r="3.500" fill="#77572d"/></svg></div>
<div class="wm"><svg width="292" height="142" fill="#cfcfcf" fill-opacity=".93">
 <text x="0" y="91" font-family="Liberation Sans" font-weight="700" font-size="66" stroke="#cfcfcf">Bai</text>
 <ellipse cx="109" cy="37" rx="10" ry="14"/><ellipse cx="129" cy="17" rx="10" ry="14"/><ellipse cx="154" cy="19" rx="10" ry="14" transform="rotate(8 154 19)"/><ellipse cx="170" cy="43" rx="10" ry="13"/>
 <path d="M139 39q9 0 16 11t14 16q9 9 5 18-5 10-17 8-8-2-18-2-9 0-17 2-12 2-16-8-4-10 6-19 7-5 12-14 6-12 15-12z"/>
 <text x="140" y="83" text-anchor="middle" font-family="Liberation Sans" font-weight="700" font-size="39" fill="#333">du</text>
 <text x="184" y="86" font-family="Noto Sans CJK SC" font-weight="900" font-size="48">经验</text>
 <text x="3" y="128" font-family="Noto Sans" font-size="33" stroke="#cfcfcf">jingyan.baidu.com</text>
</svg></div>
<script src="https://cdn.jsdelivr.net/npm/bootstrap@5.3.0/dist/js/bootstrap.bundle.min.js"></script>
</body>
</html>
